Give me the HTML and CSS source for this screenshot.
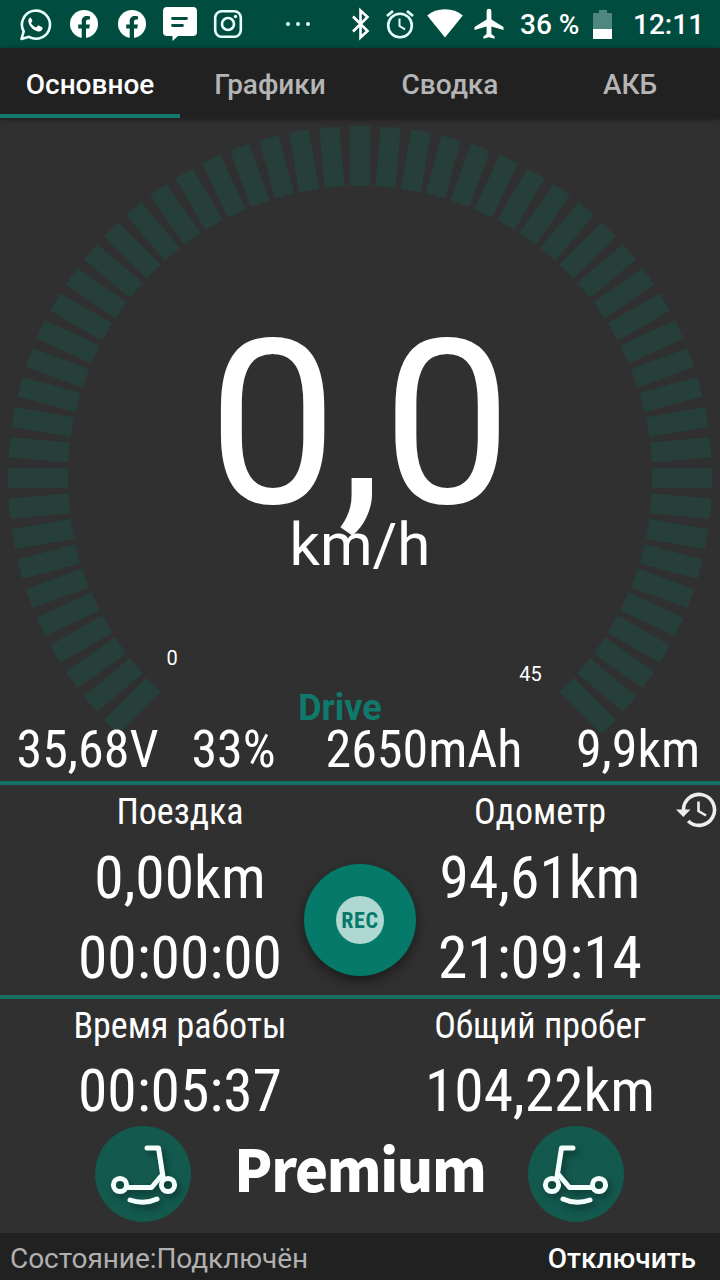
FILE: index.html
```
<!DOCTYPE html>
<html lang="ru">
<head>
  <meta charset="UTF-8">
  <meta name="viewport" content="width=device-width, initial-scale=1.0">
  <title>Основное</title>
  <link rel="stylesheet" href="styles.css">
</head>
<body>
  <div class="statusbar">
    <svg class="notifications" width="320" height="48" viewBox="0 0 320 48">
      <!-- whatsapp -->
      <path d="M21.5 39l2.2-7.6A14 14 0 1 1 29 36.8z" fill="none" stroke="#e8fffb" stroke-width="2.6" stroke-linejoin="round"/>
      <path d="M30.5 17.5c-1 .3-2.600 1.900-2.200 4.300.8 4.300 5.200 8.900 10 9.700 2.300.3 4.200-1.200 4.300-3.200 0-.7-.2-.9-.8-1.200l-3.100-1.500c-.5-.2-.9-.1-1.200.3l-1.300 1.600c-2.200-.8-4.100-2.500-5.200-4.600l1.100-1.500c.3-.4.300-.7.100-1.200l-1.300-2.500c-.1-.3-.3-.3-.4-.2z" fill="#fff"/>
      <!-- facebook x2 -->
      <g id="fb">
        <circle cx="84" cy="24" r="14" fill="#fff"/>
        <path d="M81.700 38.500V28.500h-3.500v-4h3.500v-3.100c0-3.600 2.100-5.500 5.300-5.500 1.500 0 3 .3 3 .3v3.400h-1.700c-1.700 0-2.300 1.100-2.300 2.100v2.800h3.900l-.6 4h-3.300v10z" fill="#004d40"/>
      </g>
      <use href="#fb" x="48"/>
      <!-- sms -->
      <path d="M167 7h26a4 4 0 0 1 4 4v21a4 4 0 0 1-4 4h-15l-5.500 5v-5H167a4 4 0 0 1-4-4V11a4 4 0 0 1 4-4z" fill="#fff"/>
      <path d="M172.500 18.500h14M172.500 25.500h10" stroke="#004d40" stroke-width="2.800" stroke-linecap="round"/>
      <!-- instagram -->
      <rect x="215.200" y="11.200" width="25.600" height="25.600" rx="6.500" fill="none" stroke="#e8fffb" stroke-width="2.600"/>
      <circle cx="228" cy="24" r="6" fill="none" stroke="#e8fffb" stroke-width="2.600"/>
      <circle cx="235.500" cy="16.500" r="1.700" fill="#e8fffb"/>
      <g fill="#e8fffb"><circle cx="288" cy="24" r="2"/><circle cx="298" cy="24" r="2"/><circle cx="308" cy="24" r="2"/></g>
    </svg>
    <svg class="system" width="160" height="48" viewBox="345 0 160 48">
      <!-- bluetooth -->
      <path d="M353 16.500l14.500 14.500-7 6.500v-27l7 6.500L353 31.500" fill="none" stroke="#fff" stroke-width="2.600"/>
      <!-- alarm -->
      <circle cx="400" cy="25.500" r="11.800" fill="none" stroke="#e8fffb" stroke-width="2.600"/>
      <path d="M387 16l6-5M413 16l-6-5" stroke="#e8fffb" stroke-width="2.800"/>
      <path d="M399.500 18.500v7.500l5.500 3.300" fill="none" stroke="#e8fffb" stroke-width="2"/>
      <!-- wifi -->
      <path d="M445 37.500L427.200 15.500C432 11.500 438 9.300 445 9.300s13 2.200 17.800 6.200z" fill="#fff"/>
      <!-- airplane -->
      <path d="M503.500 30v-2.900L491.400 19.500v-8.300a2.400 2.400 0 0 0-4.800 0v8.300L474.500 27.100V30l12.100-3.600v7.700l-3.200 2.300v2.400l5.600-1.600 5.600 1.600v-2.400l-3.200-2.300v-7.700z" fill="#fff"/>
    </svg>
    <span class="percent">36 %</span>
    <svg class="battery" width="20" height="30" viewBox="0 0 20 30">
      <path d="M6 0h8v3h5v16H0V3h6z" fill="#4e877d"/>
      <path d="M0 19h19v10H0z" fill="#fff"/>
    </svg>
    <span class="clock">12:11</span>
  </div>

  <div class="tabs">
    <div class="tab active">Основное</div>
    <div class="tab">Графики</div>
    <div class="tab">Сводка</div>
    <div class="tab">АКБ</div>
  </div>

  <svg class="gauge" width="720" height="614" viewBox="0 118 720 614">
    <g id="ticks"></g>
    <text class="speed" x="360" y="502.500">0,0</text>
    <text class="speed-unit" x="360" y="565">km/h</text>
    <text class="limit" x="172" y="665">0</text>
    <text class="limit" x="530.500" y="681">45</text>
    <text class="mode" x="340" y="720">Drive</text>
  </svg>

  <div class="battery-row">
    <span class="narrow">35,68V</span>
    <span class="narrow">33%</span>
    <span class="narrow">2650mAh</span>
    <span class="narrow">9,9km</span>
  </div>

  <div class="trip">
    <div class="column">
      <div class="label narrow">Поездка</div>
      <div class="value narrow">0,00km</div>
      <div class="value narrow">00:00:00</div>
    </div>
    <div class="column">
      <div class="label narrow">Одометр</div>
      <div class="value narrow">94,61km</div>
      <div class="value narrow">21:09:14</div>
    </div>
    <svg class="history" width="42" height="40" viewBox="0 0 42 40">
      <path d="M8.500 20A15.500 15.500 0 1 1 13.200 31" fill="none" stroke="#eee" stroke-width="3.600"/>
      <path d="M1 19.500h14.500L8.300 27z" fill="#eee"/>
      <path d="M23.500 11.500v9.500l7.500 4.500" fill="none" stroke="#eee" stroke-width="2.600"/>
    </svg>
    <button class="rec"><span class="rec-dot">REC</span></button>
  </div>

  <div class="totals">
    <div class="column">
      <div class="label narrow">Время работы</div>
      <div class="value narrow">00:05:37</div>
    </div>
    <div class="column">
      <div class="label narrow">Общий пробег</div>
      <div class="value narrow">104,22km</div>
    </div>
  </div>

  <div class="premium">
    <svg class="scooter" width="96" height="96" viewBox="0 0 96 96">
      <g>
        <circle cx="25" cy="59" r="6.600"/>
        <circle cx="73" cy="59" r="6.600"/>
        <path d="M52 22h11.500l4.500 29M33 61.500h23.500l11-13M35 74q14 5 27-1"/>
      </g>
    </svg>
    <span class="premium-text">Premium</span>
    <svg class="scooter" width="96" height="96" viewBox="0 0 96 96">
      <g>
        <circle cx="24" cy="59" r="6.600"/>
        <circle cx="71" cy="59" r="6.600"/>
        <path d="M45 22H33.500L29 51M63 61.500H41.500l-11-13M35 73q13 6 27 1"/>
      </g>
    </svg>
  </div>

  <div class="footer">
    <span class="state">Состояние:Подключён</span>
    <span class="disconnect">Отключить</span>
  </div>

  <script>
    const ticks = document.getElementById('ticks');
    // 270 degree scale, one tick every 5 degrees
    for (let angle = -135; angle <= 135; angle += 5) {
      const tick = document.createElementNS('http://www.w3.org/2000/svg', 'rect');
      tick.setAttribute('x', 350);
      tick.setAttribute('y', 126);
      tick.setAttribute('width', 20);
      tick.setAttribute('height', 60);
      tick.setAttribute('transform', `rotate(${angle} 360 478)`);
      ticks.appendChild(tick);
    }
  </script>
</body>
</html>
```
FILE: styles.css
```
body {
  margin: 0;
  width: 720px;
  height: 1280px;
  overflow: hidden;
  display: flex;
  flex-direction: column;
  font-family: Roboto, sans-serif;
  background-color: #303030;
  color: #fff;
}

svg {
  display: block;
  flex: none;
}

.statusbar {
  display: flex;
  align-items: center;
  height: 48px;
  background-color: #004d40;
  font-size: 28px;
  font-weight: 500;
  line-height: 48px;
}

.system {
  margin-left: 25px;
}

.percent {
  width: 72px;
  padding: 2px 0 0 15px;
  white-space: nowrap;
}

.battery {
  margin: 1px 0 0 1px;
}

.clock {
  margin-left: 20px;
  padding-top: 2px;
}

.tabs {
  display: flex;
  height: 70px;
  background-color: #212121;
  box-shadow: 0 1px 5px rgba(0, 0, 0, 0.5);
  z-index: 1;
}

.tab {
  flex: 1;
  box-sizing: border-box;
  border-bottom: 4px solid transparent;
  text-align: center;
  font-size: 28px;
  font-weight: 500;
  line-height: 73px;
  color: #b5b5b5;
}

.tab.active {
  color: #fff;
  border-color: #13796c;
}

#ticks {
  fill: #263f3b;
}

.gauge text {
  fill: #fff;
  text-anchor: middle;
}

.gauge .speed {
  font-size: 230px;
}

.gauge .speed-unit {
  font-size: 60px;
}

.gauge .limit {
  font-size: 20px;
}

.gauge .mode {
  font-size: 36px;
  font-weight: bold;
  fill: #0f7a6c;
}

/* condensed digits and labels */
.narrow {
  font-family: "Roboto Condensed", Roboto, sans-serif;
  font-stretch: 75%;
  white-space: nowrap;
}

.battery-row {
  display: grid;
  grid-template-columns: 175px 117px 264px 164px;
  height: 49px;
  font-size: 52px;
  line-height: 35px;
  text-align: center;
}

.trip,
.totals {
  display: flex;
  border-top: 4px solid #176f63;
}

.trip {
  position: relative;
  height: 210px;
}

.totals {
  height: 119px;
}

.column {
  width: 360px;
  text-align: center;
}

.label {
  height: 52px;
  font-size: 36px;
  line-height: 55px;
}

.value {
  height: 80px;
  font-size: 59.5px;
  line-height: 82px;
}

.totals .value {
  height: 67px;
  line-height: 81px;
}

.history {
  position: absolute;
  top: 5px;
  right: 3px;
}

.rec {
  position: absolute;
  left: 304px;
  top: 79px;
  width: 112px;
  height: 112px;
  padding: 32px;
  border: none;
  border-radius: 50%;
  background-color: #057a6a;
  box-shadow: 0 5px 12px rgba(0, 0, 0, 0.45);
}

.rec-dot {
  display: block;
  width: 48px;
  height: 48px;
  border-radius: 50%;
  background-color: #b0d8d2;
  color: #057a6a;
  font-family: Roboto, sans-serif;
  font-size: 22px;
  font-weight: bold;
  font-stretch: 75%;
  letter-spacing: 0.6px;
  line-height: 49px;
  text-align: center;
}

.premium {
  display: flex;
  align-items: center;
  height: 115px;
  padding: 0 96px 0 95px;
  justify-content: space-between;
}

.scooter {
  margin-top: -4px;
  border-radius: 50%;
  background-color: #13594e;
  fill: none;
  stroke: #f4fffd;
  stroke-width: 5;
  stroke-linecap: round;
  stroke-linejoin: round;
}

.scooter g {
  filter: drop-shadow(3px 4px 3px rgba(0, 0, 0, 0.35));
}

.premium-text {
  font-family: "Noto Sans CJK SC", "Noto Sans", sans-serif;
  font-size: 58px;
  font-weight: 900;
  letter-spacing: -1.4px;
  line-height: 96px;
  margin-top: -18px;
  transform: scaleX(0.96);
}

.footer {
  display: flex;
  justify-content: space-between;
  height: 47px;
  padding: 0 24px 0 10px;
  background-color: #212121;
  font-size: 28px;
  line-height: 51px;
}

.state {
  color: #b0b0b0;
  letter-spacing: -0.06px;
}

.disconnect {
  font-weight: 500;
}
```
